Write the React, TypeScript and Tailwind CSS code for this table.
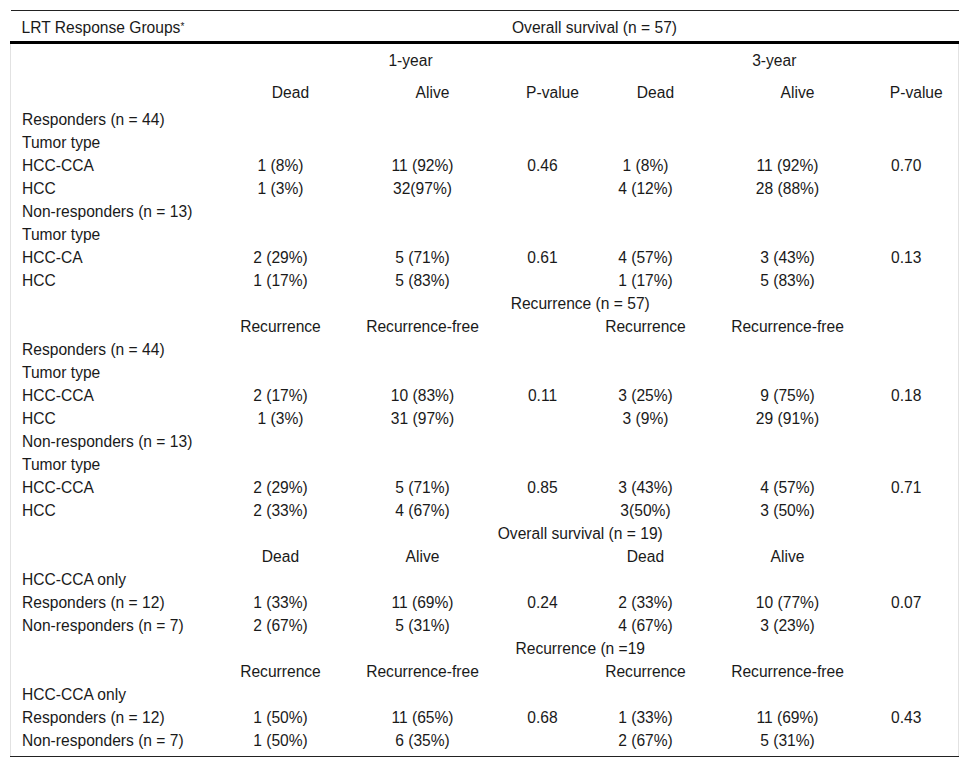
type Row =
  | { kind: "label"; label: string }
  | { kind: "span"; label: string }
  | { kind: "data"; label?: string; cells: string[] };

const rows: Row[] = [
  { kind: "label", label: "Responders (n = 44)" },
  { kind: "label", label: "Tumor type" },
  { kind: "data", label: "HCC-CCA", cells: ["1 (8%)", "11 (92%)", "0.46", "1 (8%)", "11 (92%)", "0.70"] },
  { kind: "data", label: "HCC", cells: ["1 (3%)", "32(97%)", "", "4 (12%)", "28 (88%)", ""] },
  { kind: "label", label: "Non-responders (n = 13)" },
  { kind: "label", label: "Tumor type" },
  { kind: "data", label: "HCC-CA", cells: ["2 (29%)", "5 (71%)", "0.61", "4 (57%)", "3 (43%)", "0.13"] },
  { kind: "data", label: "HCC", cells: ["1 (17%)", "5 (83%)", "", "1 (17%)", "5 (83%)", ""] },
  { kind: "span", label: "Recurrence (n = 57)" },
  { kind: "data", cells: ["Recurrence", "Recurrence-free", "", "Recurrence", "Recurrence-free", ""] },
  { kind: "label", label: "Responders (n = 44)" },
  { kind: "label", label: "Tumor type" },
  { kind: "data", label: "HCC-CCA", cells: ["2 (17%)", "10 (83%)", "0.11", "3 (25%)", "9 (75%)", "0.18"] },
  { kind: "data", label: "HCC", cells: ["1 (3%)", "31 (97%)", "", "3 (9%)", "29 (91%)", ""] },
  { kind: "label", label: "Non-responders (n = 13)" },
  { kind: "label", label: "Tumor type" },
  { kind: "data", label: "HCC-CCA", cells: ["2 (29%)", "5 (71%)", "0.85", "3 (43%)", "4 (57%)", "0.71"] },
  { kind: "data", label: "HCC", cells: ["2 (33%)", "4 (67%)", "", "3(50%)", "3 (50%)", ""] },
  { kind: "span", label: "Overall survival (n = 19)" },
  { kind: "data", cells: ["Dead", "Alive", "", "Dead", "Alive", ""] },
  { kind: "label", label: "HCC-CCA only" },
  { kind: "data", label: "Responders (n = 12)", cells: ["1 (33%)", "11 (69%)", "0.24", "2 (33%)", "10 (77%)", "0.07"] },
  { kind: "data", label: "Non-responders (n = 7)", cells: ["2 (67%)", "5 (31%)", "", "4 (67%)", "3 (23%)", ""] },
  { kind: "span", label: "Recurrence (n =19" },
  { kind: "data", cells: ["Recurrence", "Recurrence-free", "", "Recurrence", "Recurrence-free", ""] },
  { kind: "label", label: "HCC-CCA only" },
  { kind: "data", label: "Responders (n = 12)", cells: ["1 (50%)", "11 (65%)", "0.68", "1 (33%)", "11 (69%)", "0.43"] },
  { kind: "data", label: "Non-responders (n = 7)", cells: ["1 (50%)", "6 (35%)", "", "2 (67%)", "5 (31%)", ""] },
];

export default function App() {
  return (
    <div className="min-h-[768px] bg-white pt-[10px] pl-[10px] text-[15.6px] leading-none text-[#1a1a1a] font-['Liberation_Sans',Arial,sans-serif]">
      <table className="w-[948px] table-fixed border-collapse">
        <colgroup>
          <col className="w-[220px]" />
          <col className="w-[120px]" />
          <col className="w-[164px]" />
          <col className="w-[76px]" />
          <col className="w-[130px]" />
          <col className="w-[154px]" />
          <col className="w-[84px]" />
        </colgroup>
        <thead>
          <tr className="h-[32px] border-t border-b-[3px] border-t-[#222] border-b-black">
            <th className="pl-[11px] pt-[4px] text-left font-normal">
              LRT Response Groups
              <sup className="relative -top-[3px] text-[10px]">*</sup>
            </th>
            <th colSpan={6} className="pt-[4px] text-center font-normal">
              Overall survival (n = 57)
            </th>
          </tr>
        </thead>
        <tbody className="border-x border-b border-x-[#e2e2e2] border-b-[#222]">
          <tr className="h-[32px]">
            <td />
            <td colSpan={3} className="pt-[4px] text-center">1-year</td>
            <td colSpan={3} className="pt-[4px] text-center">3-year</td>
          </tr>
          <tr className="h-[32px]">
            <td />
            {["Dead", "Alive", "P-value", "Dead", "Alive", "P-value"].map((h, i) => (
              <td key={i} className="pt-[4px] text-center">{h}</td>
            ))}
          </tr>
          {rows.map((row, i) => {
            const last = i === rows.length - 1;
            const pad = last ? "pt-[4px] pb-[6px]" : "pt-[4px]";
            const h = last ? "h-[29px]" : "h-[23px]";
            if (row.kind === "label") {
              return (
                <tr key={i} className={h}>
                  <td colSpan={7} className={`pl-[11px] text-left ${pad}`}>{row.label}</td>
                </tr>
              );
            }
            if (row.kind === "span") {
              return (
                <tr key={i} className={h}>
                  <td />
                  <td colSpan={6} className={`pr-[28px] text-center ${pad}`}>{row.label}</td>
                </tr>
              );
            }
            return (
              <tr key={i} className={h}>
                <td className={`pl-[11px] text-left whitespace-nowrap ${pad}`}>{row.label ?? ""}</td>
                {row.cells.map((c, j) => (
                  <td key={j} className={`pr-[20px] text-center whitespace-nowrap ${pad}`}>{c}</td>
                ))}
              </tr>
            );
          })}
        </tbody>
      </table>
    </div>
  );
}
